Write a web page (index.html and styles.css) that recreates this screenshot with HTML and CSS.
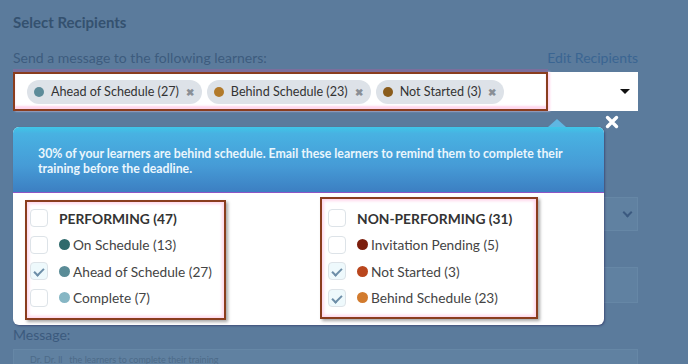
FILE: index.html
```html
<!DOCTYPE html>
<html lang="en">
  <head>
    <meta charset="UTF-8" />
    <meta name="viewport" content="width=device-width, initial-scale=1.0" />
    <title>Select Recipients</title>
    <link rel="stylesheet" href="styles.css">
  </head>
  <body>
    <div class="page">
      <h2 class="title">Select Recipients</h2>
      <div class="label-row">
        <span>Send a message to the following learners:</span>
        <a href="#" class="edit-link">Edit Recipients</a>
      </div>

      <div class="recipient-select">
        <div class="tag-box">
          <span class="tag"><i class="dot dot-ahead-tag"></i>Ahead of Schedule (27)<b class="tag-x">&#10006;</b></span>
          <span class="tag"><i class="dot dot-behind-tag"></i>Behind Schedule (23)<b class="tag-x">&#10006;</b></span>
          <span class="tag"><i class="dot dot-notstarted-tag"></i>Not Started (3)<b class="tag-x">&#10006;</b></span>
        </div>
        <span class="caret"></span>
      </div>

      <!-- page behind the overlay -->
      <div class="ghost-field ghost-select"><span class="chevron"></span></div>
      <div class="ghost-field ghost-input"></div>
      <div class="message-label">Message:</div>
      <div class="ghost-field ghost-textarea"><span class="ghost-text">Dr. Dr. ll &nbsp; the learners to complete their training</span></div>

      <div class="popover">
        <span class="popover-arrow"></span>
        <div class="popover-head">
          30% of your learners are behind schedule. Email these learners to remind them to complete their
          training before the deadline.
        </div>
        <div class="popover-body">
          <div class="group group-left">
            <div class="row head"><span class="check"></span>PERFORMING (47)</div>
            <div class="row"><span class="check"></span><i class="dot dot-on"></i>On Schedule (13)</div>
            <div class="row"><span class="check checked"></span><i class="dot dot-ahead"></i>Ahead of Schedule (27)</div>
            <div class="row"><span class="check"></span><i class="dot dot-complete"></i>Complete (7)</div>
          </div>
          <div class="group group-right">
            <div class="row head"><span class="check"></span>NON-PERFORMING (31)</div>
            <div class="row"><span class="check"></span><i class="dot dot-invite"></i>Invitation Pending (5)</div>
            <div class="row"><span class="check checked"></span><i class="dot dot-notstarted"></i>Not Started (3)</div>
            <div class="row"><span class="check checked"></span><i class="dot dot-behind"></i>Behind Schedule (23)</div>
          </div>
        </div>
      </div>
      <svg class="close-x" width="14" height="14" viewBox="0 0 14 14">
        <path d="M2.5 2.5 L11.5 11.5 M11.5 2.5 L2.5 11.5" stroke="#fff" stroke-width="3.4" stroke-linecap="round" />
      </svg>
    </div>
  </body>
</html>
```

FILE: styles.css
```css
body {
  margin: 0;
  font-family: "Lato", "Open Sans", sans-serif;
  background-color: #5b7b9c;
  color: #3a5a7c;
}
.page {
  position: relative;
  padding: 12px 50px 0 13px;
  height: 352px;
  overflow: hidden;
}
.title {
  margin: 0;
  font-size: 15px;
  line-height: 20px;
  font-weight: 700;
  color: #34516f;
}
.label-row {
  margin-top: 18px;
  display: flex;
  justify-content: space-between;
  font-size: 14px;
  line-height: 16px;
  color: #3d5c7e;
}
.edit-link {
  color: #3a6592;
  text-decoration: none;
}

/* recipient select */
.recipient-select {
  margin-top: 6px;
  height: 39px;
  background: #fff;
  display: flex;
  align-items: center;
  justify-content: space-between;
}
.tag-box {
  box-sizing: border-box;
  width: 535px;
  height: 39px;
  border: 2px solid #8a3d1e;
  box-shadow: inset 0 -3px 2px #ffd6ec, 0 -3px 0 #7b6e9c, 2px 0 2px #ffd6ec;
  display: flex;
  align-items: center;
  gap: 5px;
  padding-left: 12px;
}
.tag {
  display: inline-flex;
  align-items: center;
  height: 24px;
  padding: 0 8px 0 7px;
  border-radius: 12px;
  background: #dde2e8;
  font-size: 12.6px;
  color: #333;
}
.tag .dot {
  margin-right: 7px;
}
.tag-x {
  margin-left: 7px;
  font-size: 10px;
  color: #8a8f96;
}
.caret {
  width: 0;
  height: 0;
  margin-right: 8px;
  border-left: 5px solid transparent;
  border-right: 5px solid transparent;
  border-top: 5px solid #111;
}

/* dots */
.dot {
  display: inline-block;
  width: 10px;
  height: 10px;
  border-radius: 50%;
  flex: none;
}
.dot-ahead-tag { background: #5d8b99; }
.dot-behind-tag { background: #b27a2b; }
.dot-notstarted-tag { background: #8a5c1c; }
.dot-on { background: #2f6a6c; }
.dot-ahead { background: #5a8c97; }
.dot-complete { background: #86b6c4; }
.dot-invite { background: #7c1e0c; }
.dot-notstarted { background: #b9461d; }
.dot-behind { background: #d27b2e; }

/* page under the overlay */
.ghost-field {
  box-sizing: border-box;
  background: #6081a1;
  border: 1px solid #6687a6;
}
.ghost-select {
  margin-top: 86px;
  height: 34px;
  position: relative;
}
.chevron {
  position: absolute;
  right: 6px;
  top: 11px;
  width: 5px;
  height: 5px;
  border-right: 2px solid #3b5a80;
  border-bottom: 2px solid #3b5a80;
  transform: rotate(45deg);
}
.ghost-input {
  margin-top: 36px;
  height: 36px;
}
.message-label {
  margin-top: 24px;
  font-size: 14px;
  line-height: 16px;
  color: #3b5a7e;
}
.ghost-textarea {
  margin-top: 6px;
  height: 40px;
  padding: 2px 16px;
  line-height: 10px;
}
.ghost-text {
  font-size: 9px;
  color: #4d6b89;
}

/* popover */
.popover {
  position: absolute;
  top: 127px;
  left: 13px;
  width: 591px;
  height: 198px;
  border-radius: 6px;
  background: #fff;
  box-shadow: 1px 1px 2px rgba(40, 40, 90, 0.5);
}
.popover-arrow {
  position: absolute;
  top: -8px;
  left: 535px;
  width: 0;
  height: 0;
  border-left: 9px solid transparent;
  border-right: 9px solid transparent;
  border-bottom: 8px solid #5fb7e2;
}
.popover-head {
  box-sizing: border-box;
  height: 66px;
  padding: 19px 30px 0 25px;
  border-radius: 6px 6px 0 0;
  border-bottom: 1px solid #8c55c4;
  background: linear-gradient(#3fc6e8 0, #48b2e2 10%, #469bd6 60%, #3c7fc2 100%);
  color: #eaf6fd;
  font-size: 12.3px;
  font-weight: 700;
  line-height: 15px;
}
.popover-body {
  position: relative;
  height: 132px;
}
.group {
  position: absolute;
  box-sizing: border-box;
  border: 2px solid #8a3d1e;
  box-shadow: inset 0 0 3px 2px #ffd8ec, 2px 2px 3px rgba(0, 0, 0, 0.35);
}
.group-left {
  left: 12px;
  top: 7px;
  width: 201px;
  height: 120px;
  padding: 3px 0 0 3px;
}
.group-right {
  left: 307px;
  top: 4px;
  width: 218px;
  height: 122px;
  padding: 6px 0 0 6px;
}
.row {
  display: flex;
  align-items: center;
  height: 26.5px;
  font-size: 13.7px;
  color: #444;
}
.row .dot {
  margin-right: 3px;
  width: 11px;
  height: 11px;
}
.row.head {
  font-weight: 700;
  font-size: 13.8px;
  color: #333;
}
.check {
  box-sizing: border-box;
  width: 18px;
  height: 18px;
  margin-right: 11px;
  border: 1px solid #dde3e8;
  border-radius: 4px;
  flex: none;
  position: relative;
}
.check.checked {
  background: #eef9fc;
}
.check.checked::after {
  content: "";
  position: absolute;
  left: 5px;
  top: 3px;
  width: 4px;
  height: 8px;
  border-right: 2.5px solid #6d8ea8;
  border-bottom: 2.5px solid #6d8ea8;
  transform: rotate(45deg);
}
.close-x {
  position: absolute;
  top: 115px;
  left: 605px;
}
```
